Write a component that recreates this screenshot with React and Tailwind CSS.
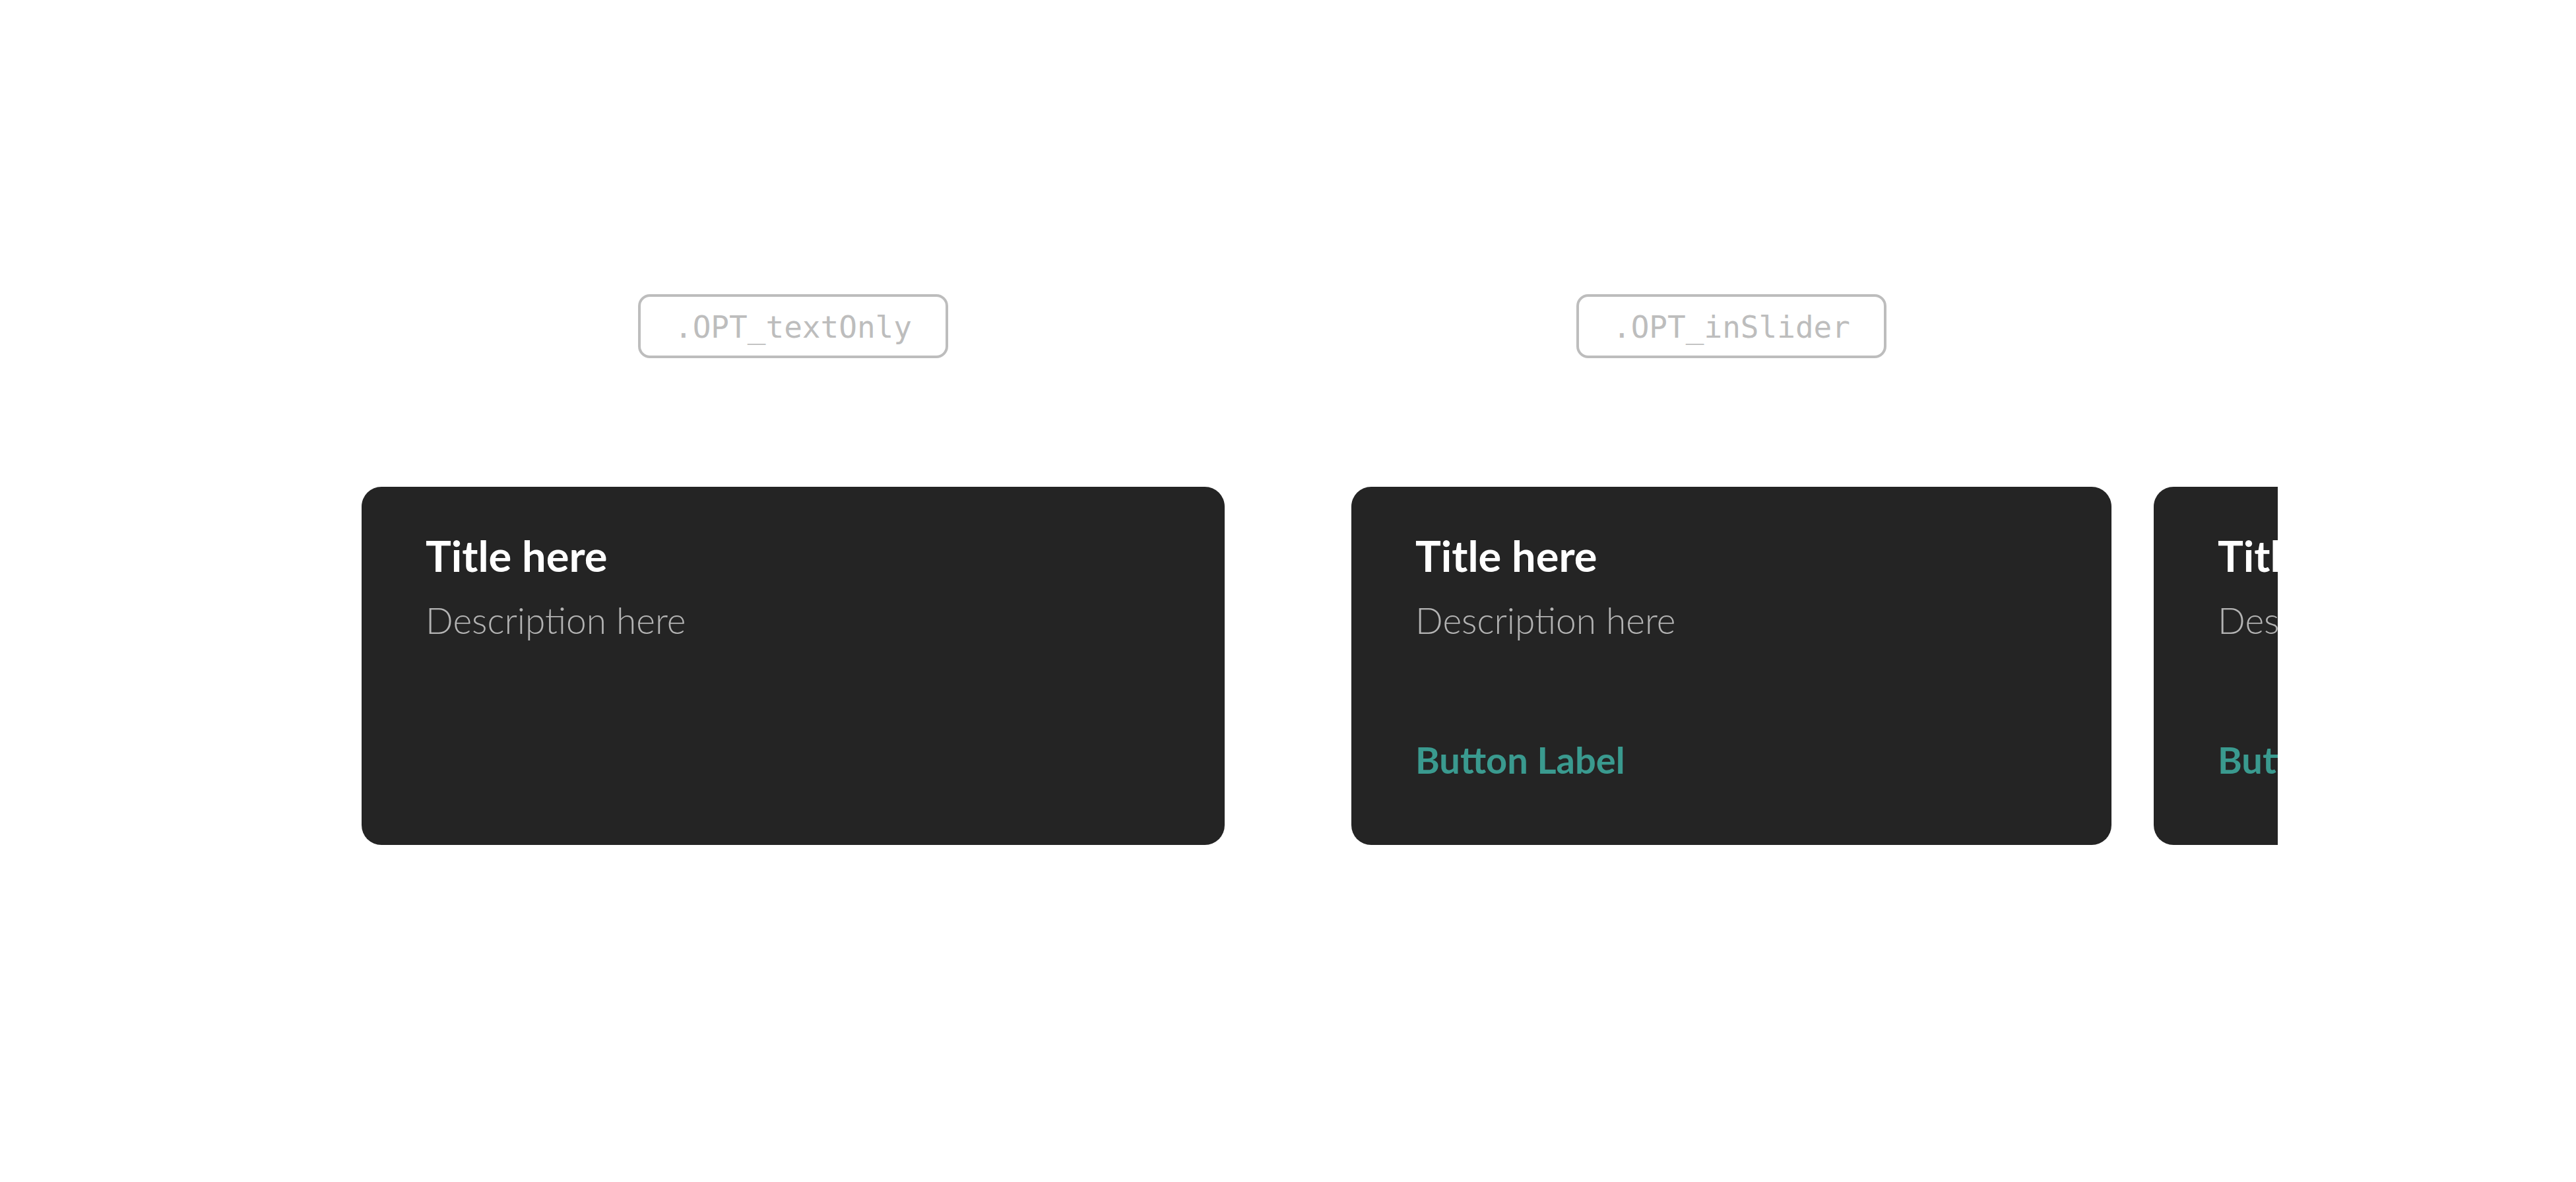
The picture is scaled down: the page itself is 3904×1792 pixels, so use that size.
import React from 'react'

const cards = [
    { title: 'Title here', description: 'Description here', button: 'Button Label' },
    { title: 'Title here', description: 'Description here', button: 'Button Label' },
    { title: 'Title here', description: 'Description here', button: 'Button Label' },
]

function OptionTag({ name }) {
    return (
        <div className="w-[470px] h-[97px] pt-[2px] flex items-center justify-center rounded-[18px] border-[4px] border-[#bdbdbd] text-[#bdbdbd] text-[46px] leading-none font-['DejaVu_Sans_Mono',monospace]">
            {name}
        </div>
    )
}

function Card({ title, description, button, className = '' }) {
    return (
        <div className={`h-[543px] shrink-0 rounded-[30px] bg-[#242424] pl-[97px] pt-[72px] flex flex-col ${className}`}>
            <h3 className="text-[65px] leading-none font-bold text-white whitespace-nowrap">{title}</h3>
            <p className="mt-[38px] text-[55px] leading-none font-light text-[#b3b3b3] whitespace-nowrap">{description}</p>
            {button && (
                <button className="mt-[156px] self-start text-[56px] leading-none font-bold text-[#3a9a8f] whitespace-nowrap">
                    {button}
                </button>
            )}
        </div>
    )
}

export default function App() {
    return (
        <div className="w-[3904px] h-[1792px] bg-white font-['Lato',sans-serif] overflow-hidden">
            <div className="flex pl-[548px] pt-[446px] gap-[192px]">
                {/* text only variant */}
                <div className="w-[1308px] flex flex-col items-center gap-[195px]">
                    <OptionTag name=".OPT_textOnly" />
                    <Card title={cards[0].title} description={cards[0].description} className="w-[1308px]" />
                </div>

                {/* slider variant: third card peeks in and is clipped */}
                <div className="w-[1152px] flex flex-col items-center gap-[195px]">
                    <OptionTag name=".OPT_inSlider" />
                    <div className="self-start w-[1404px] overflow-hidden">
                        <div className="flex gap-[64px]">
                            {cards.map((c, i) => (
                                <Card key={i} {...c} className="w-[1152px]" />
                            ))}
                        </div>
                    </div>
                </div>
            </div>
        </div>
    )
}
